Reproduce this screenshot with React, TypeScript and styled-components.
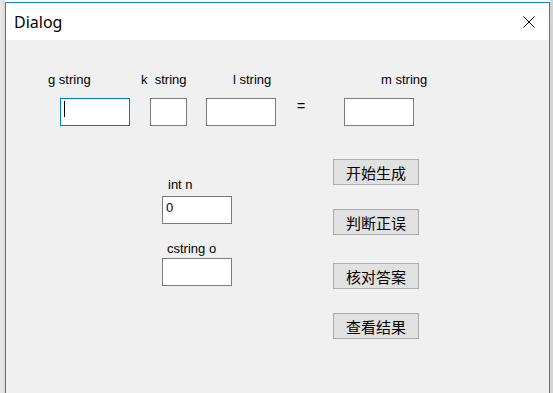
import React from "react";
import styled, { createGlobalStyle } from "styled-components";

const Global = createGlobalStyle`
  html, body { margin: 0; padding: 0; background: #ffffff; overflow: hidden; }
  body { font-family: "Liberation Sans", Arial, sans-serif; }
`;

const Screen = styled.div`
  width: 553px;
  height: 393px;
  padding: 2px 3px 0 5px;
  box-sizing: border-box;
  overflow: hidden;
  background: linear-gradient(to right, #e9e9e9 0px, #dcdcdc 5px, #ffffff 5px, #ffffff 550px, #d4d4d4 550px);
`;

const Window = styled.div`
  width: 545px;
  height: 420px;
  box-sizing: border-box;
  border: 1px solid #1883d7;
  border-bottom: none;
  display: flex;
  flex-direction: column;
  background: #f0f0f0;
`;

const TitleBar = styled.div`
  height: 37px;
  flex: none;
  background: #ffffff;
  display: flex;
  justify-content: space-between;
  align-items: flex-start;
  padding: 9px 14px 0 8px;
  box-sizing: border-box;
`;

const Title = styled.div`
  font-family: "Noto Sans", "Open Sans", sans-serif;
  font-size: 16px;
  line-height: 20px;
  color: #000000;
`;

const CloseIcon = styled.svg`
  width: 12px;
  height: 12px;
  margin-top: 4px;
  display: block;
`;

const Body = styled.div`
  flex: 1;
  display: flex;
  flex-direction: column;
`;

const TopRow = styled.div`
  display: flex;
  align-items: flex-start;
  margin-top: 32px;
`;

const Field = styled.div<{ $width: number; $ml: number }>`
  width: ${(p) => p.$width}px;
  margin-left: ${(p) => p.$ml}px;
  display: flex;
  flex-direction: column;
  flex: none;
`;

const Label = styled.div<{ $shift?: number }>`
  height: 16px;
  line-height: 16px;
  font-size: 13px;
  color: #000000;
  white-space: pre;
  margin-left: ${(p) => p.$shift ?? 0}px;
`;

const TextBox = styled.div<{ $focused?: boolean; $mt?: number }>`
  height: 28px;
  box-sizing: border-box;
  background: #ffffff;
  border: 1px solid ${(p) => (p.$focused ? "#0078d7" : "#7a7a7a")};
  margin-top: ${(p) => p.$mt ?? 0}px;
  padding: 3px 3px 0 3px;
  font-size: 13px;
  line-height: 16px;
  color: #000000;
`;

const Caret = styled.div`
  width: 1px;
  height: 16px;
  margin-top: -1px;
  background: #000000;
`;

const Equals = styled.div`
  margin-top: 10px;
  font-size: 14px;
  line-height: 16px;
  color: #000000;
`;

const LowerRow = styled.div`
  display: flex;
  align-items: flex-start;
`;

const MiddleColumn = styled.div`
  width: 70px;
  margin-left: 156px;
  margin-top: 51px;
  display: flex;
  flex-direction: column;
`;

const ButtonColumn = styled.div`
  margin-left: 101px;
  margin-top: 33px;
  display: flex;
  flex-direction: column;
`;

const Button = styled.button<{ $mt: number }>`
  width: 86px;
  height: 26px;
  margin-top: ${(p) => p.$mt}px;
  padding: 0;
  box-sizing: border-box;
  background: #e1e1e1;
  border: 1px solid #adadad;
  border-radius: 0;
  font-family: "Noto Sans CJK SC", "Noto Sans", sans-serif;
  font-size: 15px;
  line-height: 1;
  color: #000000;
  display: flex;
  align-items: center;
  justify-content: center;
`;

const buttons = [
  { text: "开始生成", mt: 0 },
  { text: "判断正误", mt: 24 },
  { text: "核对答案", mt: 28 },
  { text: "查看结果", mt: 24 },
];

export default function App() {
  return (
    <>
      <Global />
      <Screen>
        <Window>
          <TitleBar>
            <Title>Dialog</Title>
            <CloseIcon viewBox="0 0 12 12">
              <path d="M0.5 0.5 L11.5 11.5 M11.5 0.5 L0.5 11.5" stroke="#000" strokeWidth="1" fill="none" />
            </CloseIcon>
          </TitleBar>
          <Body>
            <TopRow>
              <Field $width={70} $ml={54}>
                <Label $shift={-12}>g string</Label>
                <TextBox $focused $mt={10} role="textbox">
                  <Caret />
                </TextBox>
              </Field>
              <Field $width={37} $ml={20}>
                <Label $shift={-9}>k  string</Label>
                <TextBox $mt={10} role="textbox" />
              </Field>
              <Field $width={70} $ml={19}>
                <Label $shift={27}>l string</Label>
                <TextBox $mt={10} role="textbox" />
              </Field>
              <Field $width={46} $ml={21}>
                <Label> </Label>
                <Equals>=</Equals>
              </Field>
              <Field $width={70} $ml={1}>
                <Label $shift={37}>m string</Label>
                <TextBox $mt={10} role="textbox" />
              </Field>
            </TopRow>
            <LowerRow>
              <MiddleColumn>
                <Label $shift={6}>int n</Label>
                <TextBox $mt={3} role="textbox">0</TextBox>
                <Label $shift={5} style={{ marginTop: 17 }}>cstring o</Label>
                <TextBox $mt={1} role="textbox" />
              </MiddleColumn>
              <ButtonColumn>
                {buttons.map((b) => (
                  <Button key={b.text} $mt={b.mt}>
                    {b.text}
                  </Button>
                ))}
              </ButtonColumn>
            </LowerRow>
          </Body>
        </Window>
      </Screen>
    </>
  );
}
